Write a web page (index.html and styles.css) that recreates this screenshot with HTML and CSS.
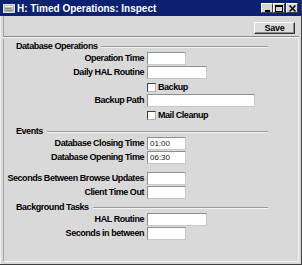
FILE: index.html
```html
<!DOCTYPE html>
<html>
<head>
<meta charset="utf-8">
<link rel="stylesheet" href="styles.css">
</head>
<body>
<div class="window">
  <div class="titlebar">
    <svg class="appicon" width="12" height="9" viewBox="0 0 12 9">
      <rect x="0.5" y="0.5" width="11" height="8" fill="#b8b8b8" stroke="#e0e0e0"/>
      <rect x="2" y="2" width="8" height="1" fill="#f0f0f0"/>
      <rect x="2" y="4" width="6" height="1" fill="#8a8a8a"/>
      <rect x="2" y="6" width="7" height="1" fill="#8a8a8a"/>
    </svg>
    <span class="title">H: Timed Operations: Inspect</span>
    <div class="winbtns">
      <span class="wbtn"><svg width="7" height="7" viewBox="0 0 7 7"><rect x="1" y="5" width="5" height="2" fill="#000"/></svg></span>
      <span class="wbtn"><svg width="8" height="7" viewBox="0 0 8 7"><rect x="0.5" y="0.5" width="7" height="6" fill="none" stroke="#000"/><rect x="0" y="0" width="8" height="2" fill="#000"/></svg></span>
      <span class="wbtn close"><svg width="7" height="7" viewBox="0 0 7 7"><path d="M0.5 0.5 L6.5 6.5 M6.5 0.5 L0.5 6.5" stroke="#000" stroke-width="1.5"/></svg></span>
    </div>
  </div>
  <div class="frame">
    <div class="toolbar">
      <button class="btn">Save</button>
    </div>
    <div class="form">
      <div class="section-head first"><span>Database Operations</span><i class="rule"></i></div>
      <div class="row"><span class="label">Operation Time</span><span class="field short"></span></div>
      <div class="row"><span class="label">Daily HAL Routine</span><span class="field medium"></span></div>
      <div class="row"><span class="label"></span><span class="check"><span class="box"></span>Backup</span></div>
      <div class="row"><span class="label">Backup Path</span><span class="field long"></span></div>
      <div class="row"><span class="label"></span><span class="check"><span class="box"></span>Mail Cleanup</span></div>

      <div class="section-head"><span>Events</span><i class="rule"></i></div>
      <div class="row"><span class="label">Database Closing Time</span><span class="field short">01:00</span></div>
      <div class="row"><span class="label">Database Opening Time</span><span class="field short">06:30</span></div>
      <div class="row spaced"><span class="label">Seconds Between Browse Updates</span><span class="field short"></span></div>
      <div class="row"><span class="label">Client Time Out</span><span class="field short"></span></div>

      <div class="section-head bg"><span>Background Tasks</span><i class="rule"></i></div>
      <div class="row"><span class="label">HAL Routine</span><span class="field medium"></span></div>
      <div class="row"><span class="label">Seconds in between</span><span class="field short"></span></div>
    </div>
  </div>
</div>
</body>
</html>
```

FILE: styles.css
```css
* { box-sizing: border-box; }
html, body { margin: 0; padding: 0; background: #d9d9d9; }
body {
  font-family: "Liberation Sans", Arial, sans-serif;
  font-size: 9px;
  letter-spacing: -0.45px;
  font-weight: bold;
  color: #000;
}
.window {
  width: 302px;
  height: 265px;
  display: flex;
  flex-direction: column;
  background: #d9d9d9;
  border-right: 1px solid #404040;
  border-bottom: 1px solid #404040;
}
.titlebar {
  height: 16px;
  background: #0c2170;
  display: flex;
  align-items: center;
  padding-left: 3px;
  padding-right: 3px;
}
.appicon { display: block; margin-right: 2px; }
.title {
  color: #fff;
  font-size: 10px;
  letter-spacing: 0;
  flex: 1;
  white-space: nowrap;
}
.winbtns { display: flex; gap: 0; }
.wbtn {
  width: 12px;
  height: 10px;
  background: #d4d4d4;
  border-top: 1px solid #fff;
  border-left: 1px solid #fff;
  border-right: 1px solid #404040;
  border-bottom: 1px solid #404040;
  display: flex;
  align-items: center;
  justify-content: center;
}
.wbtn.close { margin-left: 1px; }
.frame {
  flex: 1;
  display: flex;
  flex-direction: column;
  border-left: 1px solid #f2f2f2;
  padding-left: 2px;
  padding-right: 2px;
  padding-bottom: 2px;
}
.toolbar {
  height: 21px;
  display: flex;
  justify-content: flex-end;
  align-items: flex-start;
  padding-top: 6px;
  padding-right: 4px;
  border-left: 1px solid #a8a8a8;
  border-bottom: 1px solid #8c8c8c;
  box-shadow: 0 1px 0 #f4f4f4;
}
.btn {
  width: 41px;
  height: 12px;
  padding: 0;
  font-family: inherit;
  font-size: 9px;
  letter-spacing: -0.3px;
  font-weight: bold;
  color: #000;
  background: #dcdcdc;
  border-top: 1px solid #fff;
  border-left: 1px solid #fff;
  border-right: 1px solid #303030;
  border-bottom: 1px solid #303030;
  box-shadow: inset -1px -1px 0 #909090;
  line-height: 10px;
}
.form {
  flex: 1;
  margin-top: 2px;
  border-left: 1px solid #a8a8a8;
  border-right: 1px solid #f4f4f4;
  border-bottom: 1px solid #f4f4f4;
  padding-top: 1px;
}
.section-head {
  height: 12px;
  display: flex;
  align-items: center;
  padding-left: 12px;
  margin-right: 30px;
  margin-top: 3px;
  white-space: nowrap;
}
.section-head.first { margin-top: 0; }
.section-head.bg { margin-top: 1px; }
.rule {
  flex: 1;
  margin-left: 4px;
  margin-top: 2px;
  height: 2px;
  border-top: 1px solid #9a9a9a;
  border-bottom: 1px solid #f4f4f4;
}
.row {
  height: 14px;
  display: grid;
  grid-template-columns: 140px auto;
  column-gap: 3px;
  align-items: start;
  white-space: nowrap;
}
.row.spaced { margin-top: 7px; }
.label {
  text-align: right;
  line-height: 13px;
}
.field {
  display: block;
  height: 13px;
  background: #fff;
  border: 1px solid #8e8e8e;
  border-right-color: #c8c8c8;
  border-bottom-color: #c8c8c8;
  font-weight: normal;
  font-size: 8px;
  letter-spacing: 0;
  color: #222;
  padding-left: 2px;
  line-height: 11px;
}
.field.short { width: 39px; }
.field.medium { width: 60px; }
.field.long { width: 108px; }
.check {
  display: flex;
  align-items: center;
  height: 14px;
  gap: 2px;
}
.box {
  width: 9px;
  height: 9px;
  background: #fff;
  border: 1px solid #404040;
  border-right-color: #b0b0b0;
  border-bottom-color: #b0b0b0;
}
```
